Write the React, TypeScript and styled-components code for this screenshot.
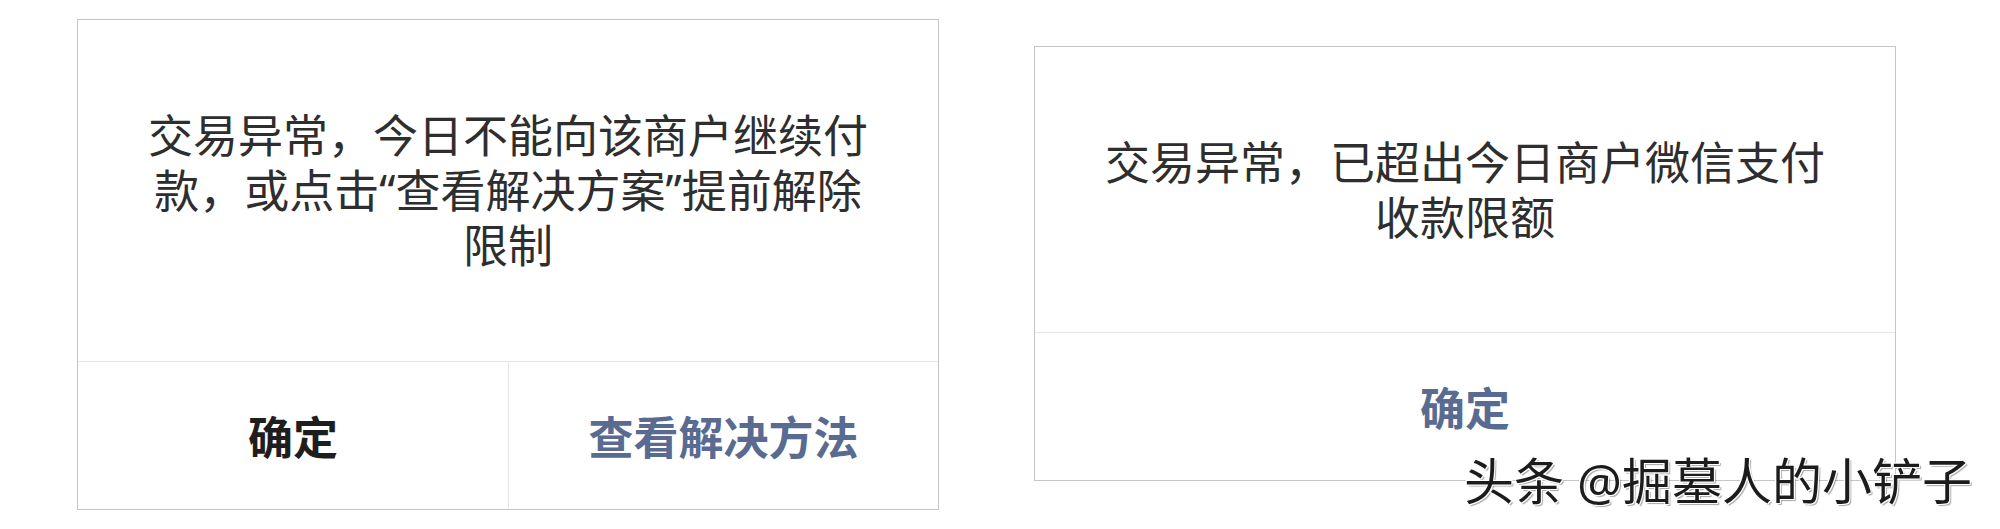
import React from 'react';
import styled, { createGlobalStyle } from 'styled-components';

const GlobalStyle = createGlobalStyle`
  html, body {
    margin: 0;
    padding: 0;
    background: #ffffff;
  }
  body {
    font-family: "Noto Sans", "Noto Sans CJK SC", sans-serif;
  }
`;

type Action = { label: string; primary?: boolean };

type DialogProps = {
  top: number;
  bodyHeight: number;
  message: string;
  actions: Action[];
};

function AlertDialog({ top, bodyHeight, message, actions }: DialogProps) {
  return (
    <Dialog $top={top}>
      <Body $height={bodyHeight}>
        <Message>{message}</Message>
      </Body>
      <Footer $cols={actions.length}>
        {actions.map((a) => (
          <ActionButton key={a.label} $primary={a.primary}>
            {a.label}
          </ActionButton>
        ))}
      </Footer>
    </Dialog>
  );
}

export default function App() {
  return (
    <>
      <GlobalStyle />
      <Page>
        <AlertDialog
          top={19}
          bodyHeight={342}
          message="交易异常，今日不能向该商户继续付款，或点击“查看解决方案”提前解除限制"
          actions={[{ label: '确定' }, { label: '查看解决方法', primary: true }]}
        />
        <AlertDialog
          top={46}
          bodyHeight={286}
          message="交易异常，已超出今日商户微信支付收款限额"
          actions={[{ label: '确定', primary: true }]}
        />
        <Watermark>头条 @掘墓人的小铲子</Watermark>
      </Page>
    </>
  );
}

const Page = styled.div`
  position: relative;
  width: 2000px;
  height: 529px;
  box-sizing: border-box;
  padding-left: 77px;
  display: flex;
  align-items: flex-start;
  gap: 95px;
  overflow: hidden;
`;

const Dialog = styled.div<{ $top: number }>`
  margin-top: ${(p) => p.$top}px;
  width: 862px;
  box-sizing: border-box;
  background: #ffffff;
  border: 1px solid #c6c6c6;
  display: flex;
  flex-direction: column;
`;

const Body = styled.div<{ $height: number }>`
  height: ${(p) => p.$height}px;
  box-sizing: border-box;
  padding: 0 62px;
  display: flex;
  align-items: center;
  justify-content: center;
  border-bottom: 1px solid #e6e6e6;
`;

const Message = styled.p`
  margin: 0;
  font-size: 45px;
  line-height: 55px;
  color: #2e2e2e;
  text-align: center;
`;

const Footer = styled.div<{ $cols: number }>`
  height: 147px;
  display: grid;
  grid-template-columns: repeat(${(p) => p.$cols}, 1fr);
`;

const ActionButton = styled.div<{ $primary?: boolean }>`
  display: flex;
  align-items: center;
  justify-content: center;
  font-size: 45px;
  font-weight: 700;
  color: ${(p) => (p.$primary ? '#5a6b92' : '#1e1e1e')};
  & + & {
    border-left: 1px solid #e6e6e6;
  }
`;

const Watermark = styled.div`
  position: absolute;
  left: 1464px;
  top: 456px;
  font-size: 50px;
  line-height: 50px;
  color: #1c1c1c;
  white-space: nowrap;
  text-shadow:
    -1px -1px 0 #ffffff,
    1px -1px 0 #ffffff,
    -1px 1px 0 #ffffff,
    1px 1px 0 #ffffff,
    2px 2px 1px rgba(0, 0, 0, 0.35);
`;
